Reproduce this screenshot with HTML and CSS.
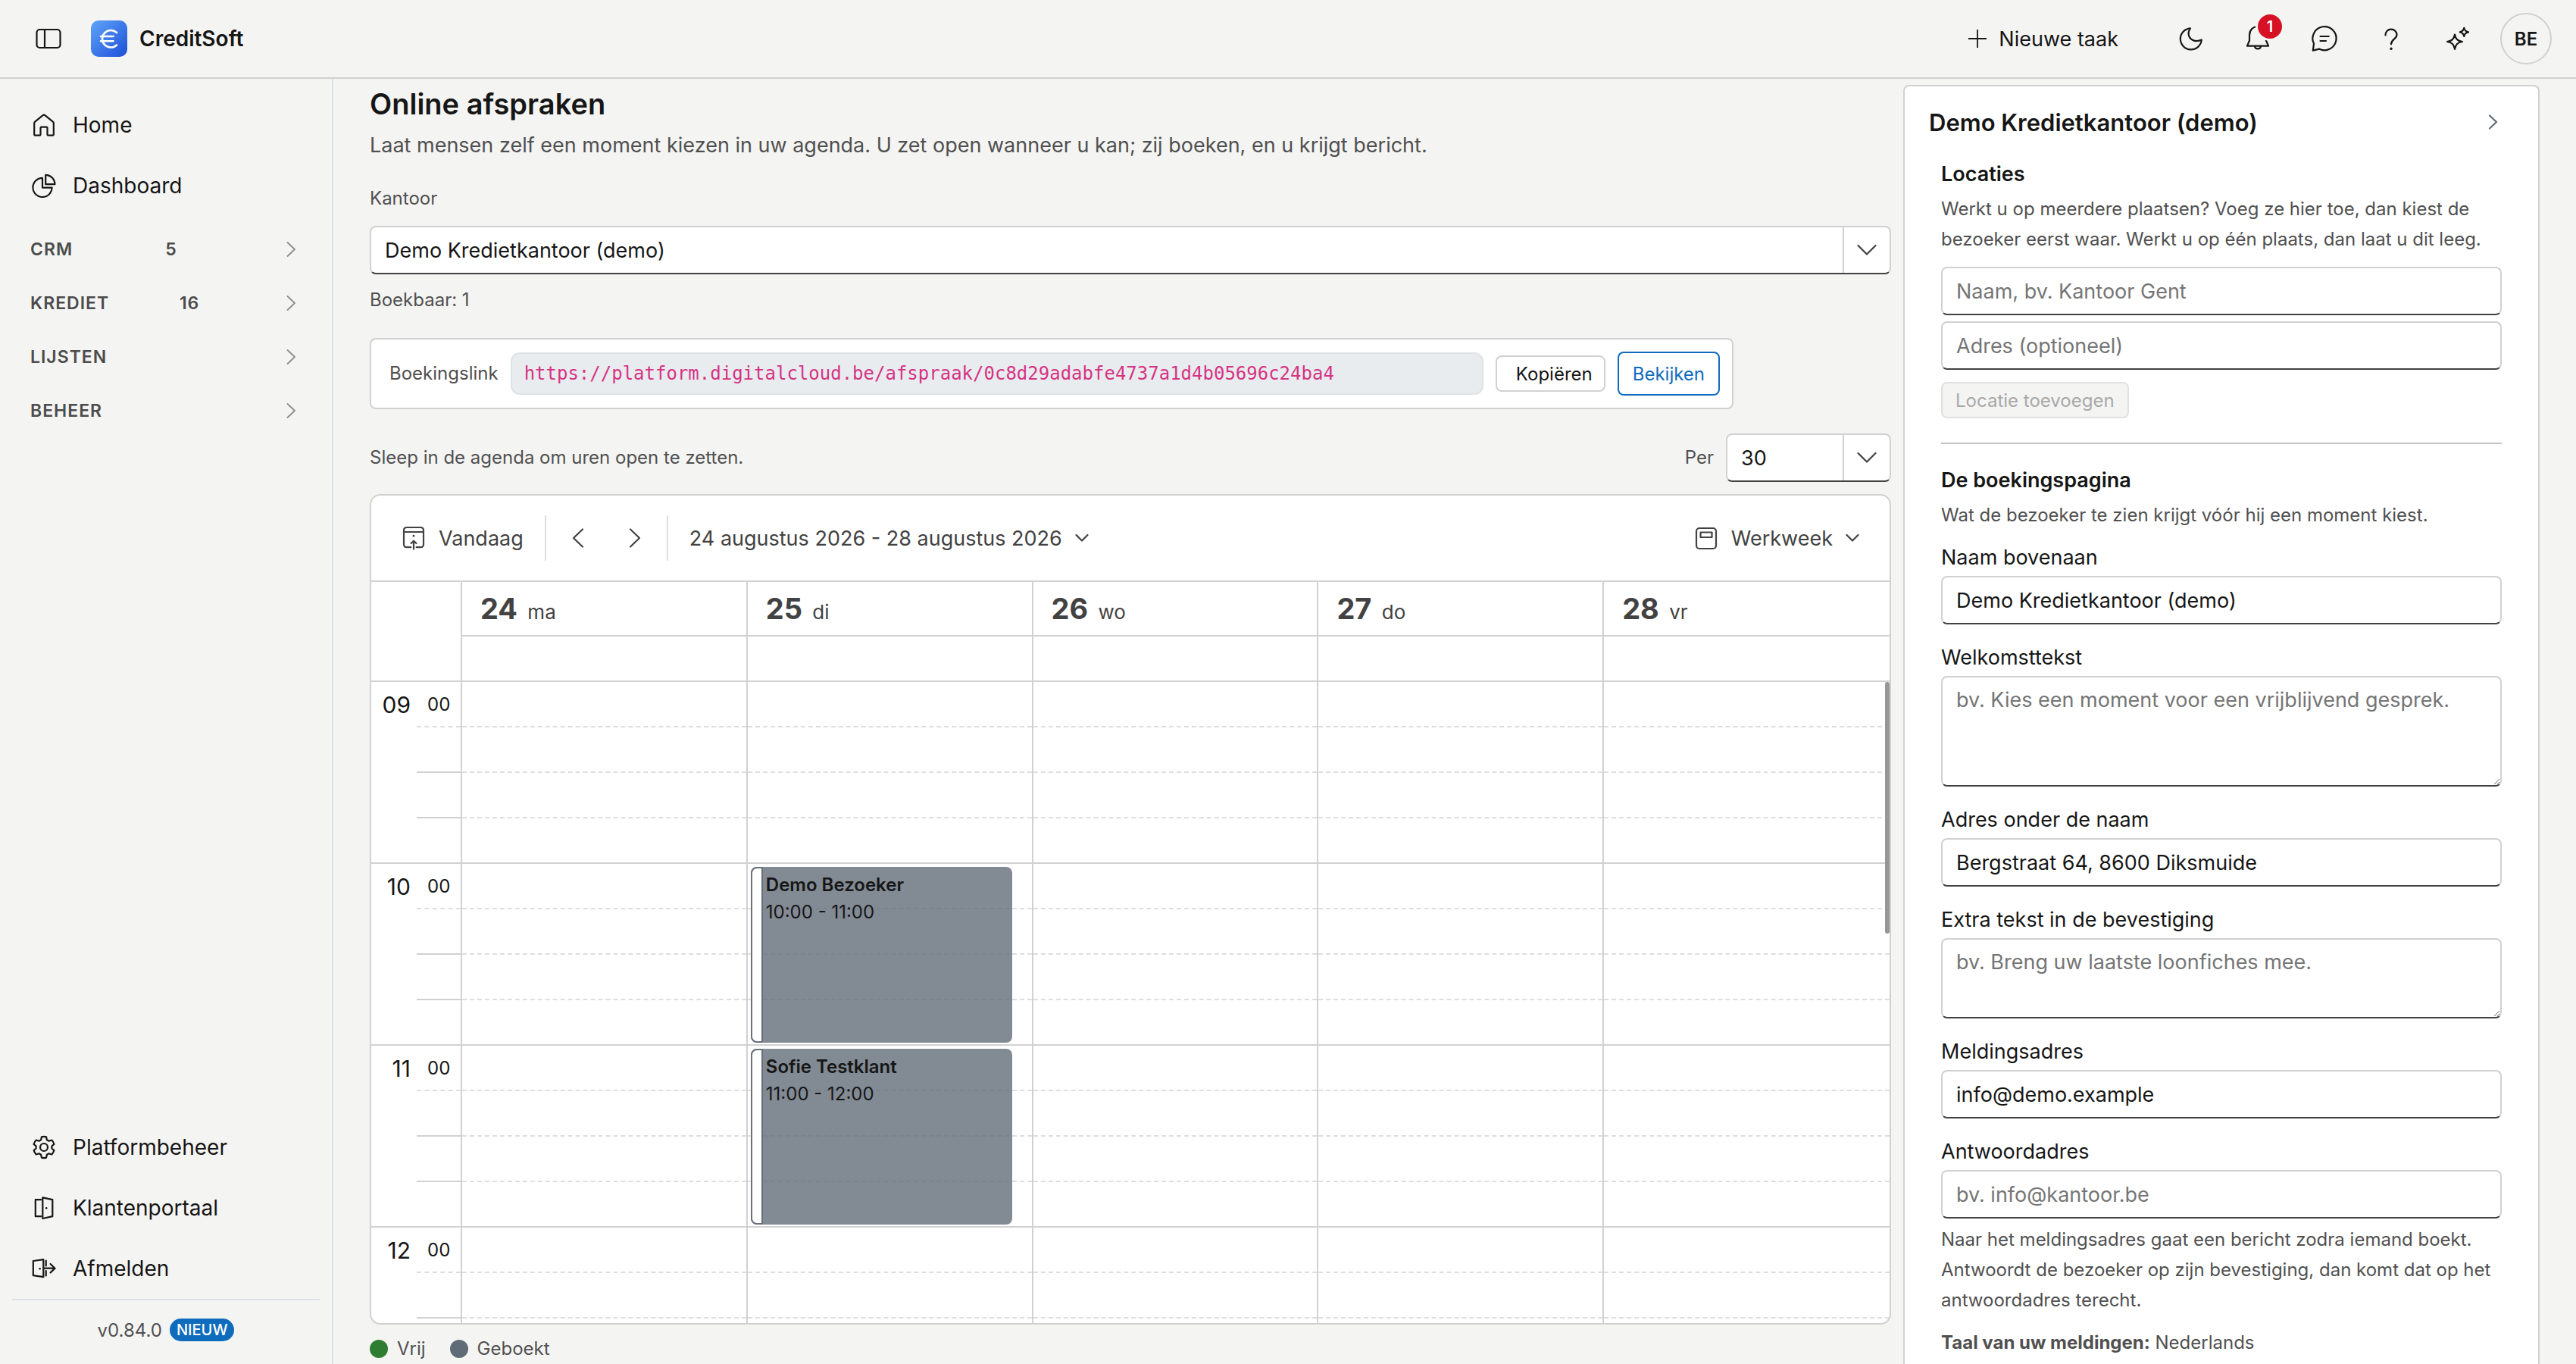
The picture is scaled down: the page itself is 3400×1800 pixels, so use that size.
FILE: index.html
```html
<!DOCTYPE html>
<html lang="nl">
<head>
  <meta charset="UTF-8">
  <meta name="viewport" content="width=device-width, initial-scale=1.0">
  <title>Online afspraken - CreditSoft</title>
  <link rel="stylesheet" href="styles.css">
</head>
<body>

  <header class="topbar">
    <button class="icon-btn" aria-label="Menu">
      <svg class="icon" viewBox="0 0 40 40"><rect x="4.5" y="8" width="31" height="24" rx="4"/><path d="M15 8V32"/></svg>
    </button>
    <a class="brand" href="#">
      <svg class="logo" viewBox="0 0 48 48">
        <defs>
          <linearGradient id="logoFill" x1="0" y1="0" x2="1" y2="1">
            <stop offset="0" stop-color="#60a5fa"/>
            <stop offset="1" stop-color="#1d4ed8"/>
          </linearGradient>
        </defs>
        <rect width="48" height="48" rx="10" fill="url(#logoFill)"/>
        <path d="M34 16A11.3 11.3 0 1 0 34 32.5M13 21H29.5M13 27.2H29.5" fill="none" stroke="#fff" stroke-width="2.6" stroke-linecap="round"/>
      </svg>
      CreditSoft
    </a>
    <div class="actions">
      <button class="new-task">
        <svg class="plus" viewBox="0 0 24 24"><path d="M12 0V24M0 12H24"/></svg>
        Nieuwe taak
      </button>
      <button class="icon-btn" aria-label="Thema">
        <svg class="icon" viewBox="0 0 40 40"><path d="M19 6.4A14 14 0 1 0 33.8 21.5C26.5 25 20 22.3 17.6 17.5C15.9 14 16.8 9.5 19 6.4Z"/></svg>
      </button>
      <button class="icon-btn" aria-label="Meldingen">
        <svg class="icon" viewBox="0 0 40 40"><path d="M20 4C13.5 4 9 9 9 15.5V22.5L6 29.7H34L31 22.5V15.5C31 9 26.5 4 20 4ZM15.8 30A4.3 4.3 0 0 0 24.2 30"/></svg>
        <span class="count">1</span>
      </button>
      <button class="icon-btn" aria-label="Berichten">
        <svg class="icon" viewBox="0 0 40 40"><path d="M6 26.5A15.6 15.6 0 1 1 13 33.6L4.8 35.6ZM14.5 17H25.7M14.5 23H22"/></svg>
      </button>
      <button class="icon-btn" aria-label="Help">
        <svg class="icon" viewBox="0 0 40 40"><path d="M12.5 15.4C12.5 10.7 15.8 7.7 20 7.7S27.5 10.8 27.5 15C27.5 20.5 20 21 20 27.3"/><circle class="dot" cx="20" cy="33.2" r="1.7"/></svg>
      </button>
      <button class="icon-btn" aria-label="Assistent">
        <svg class="icon" viewBox="0 0 40 40"><path d="M16 14.5C17.2 20.7 19.5 22.8 26 24C19.5 25.2 17.2 27.5 16 33.8C14.8 27.5 12.5 25.2 6 24C12.5 22.8 14.8 20.7 16 14.5ZM28.3 5.8C29 9.4 30.2 10.6 34 11.4C30.2 12.2 29 13.4 28.3 17C27.6 13.4 26.4 12.2 22.8 11.4C26.4 10.6 27.6 9.4 28.3 5.8Z"/></svg>
      </button>
      <button class="avatar">BE</button>
    </div>
  </header>

  <div class="layout">

    <nav class="sidebar">
      <a class="nav-item" href="#">
        <svg viewBox="0 0 32 32"><path d="M3.2 13.6C3.2 12.6 3.5 12.2 4.2 11.6L14.6 3.1Q16 2.1 17.4 3.1L27.8 11.6C28.5 12.2 28.8 12.6 28.8 13.6V28.5Q28.8 29.6 27.7 29.6H21.6Q20.5 29.6 20.5 28.5V19.7Q20.5 18.6 19.4 18.6H12.6Q11.5 18.6 11.5 19.7V28.5Q11.5 29.6 10.4 29.6H4.3Q3.2 29.6 3.2 28.5Z"/></svg>
        Home
      </a>
      <a class="nav-item" href="#">
        <svg viewBox="0 0 32 32"><path d="M14 5.8A12.6 12.6 0 1 0 26.6 18.6H14ZM18.2 1.8A12.4 12.4 0 0 1 30.4 14.2H18.2Z"/></svg>
        Dashboard
      </a>
      <div class="groups">
        <button class="group"><span>CRM</span><span>5</span><svg class="group-arrow" viewBox="0 0 36 20"><path d="M23.5 1L33 10L23.5 19"/></svg></button>
        <button class="group"><span>KREDIET</span><span>16</span><svg class="group-arrow" viewBox="0 0 36 20"><path d="M23.5 1L33 10L23.5 19"/></svg></button>
        <button class="group"><span>LIJSTEN</span><svg class="group-arrow" viewBox="0 0 36 20"><path d="M23.5 1L33 10L23.5 19"/></svg></button>
        <button class="group"><span>BEHEER</span><svg class="group-arrow" viewBox="0 0 36 20"><path d="M23.5 1L33 10L23.5 19"/></svg></button>
      </div>

      <div class="sidebar-bottom">
        <a class="nav-item" href="#">
          <svg viewBox="0 0 32 32"><path d="M12.1 6.3L12.9 2.4Q16 1.4 19.1 2.4L19.9 6.3L22.5 7.7L26.3 6.5Q28.6 8.8 29.4 11.9L26.4 14.5V17.5L29.4 20.1Q28.6 23.2 26.3 25.5L22.5 24.3L19.9 25.7L19.1 29.6Q16 30.6 12.9 29.6L12.1 25.7L9.5 24.3L5.7 25.5Q3.4 23.2 2.6 20.1L5.6 17.5V14.5L2.6 11.9Q3.4 8.8 5.7 6.5L9.5 7.7Z"/><circle cx="16" cy="16" r="5"/></svg>
          Platformbeheer
        </a>
        <a class="nav-item" href="#">
          <svg viewBox="0 0 32 32"><path d="M12 5.2H4.8V27.2H12M14.3 2.4L27.3 5.2V27.2L14.3 30Z"/><circle class="dot" cx="19.2" cy="16.2" r="1.3"/></svg>
          Klantenportaal
        </a>
        <a class="nav-item" href="#">
          <svg viewBox="0 0 32 32"><path d="M1.8 6L15.3 4.2V27.2L1.8 25.2ZM18.7 5.5V12.5M18.7 19V25.5M15.3 15.7H30.3M24.6 10L30.5 15.7L24.6 21.4"/><circle class="dot" cx="10.6" cy="16.2" r="1.3"/></svg>
          Afmelden
        </a>
        <div class="version">v0.84.0 <span class="new-badge">NIEUW</span></div>
      </div>
    </nav>

    <main class="content">
      <h1>Online afspraken</h1>
      <p class="subtitle">Laat mensen zelf een moment kiezen in uw agenda. U zet open wanneer u kan; zij boeken, en u krijgt bericht.</p>

      <label class="small" for="kantoor">Kantoor</label>
      <div class="dropdown office">
        <select id="kantoor"><option>Demo Kredietkantoor (demo)</option></select>
        <span class="dropdown-arrow"><svg viewBox="0 0 26 16"><path d="M1.5 2L13 13.5L24.5 2"/></svg></span>
      </div>
      <p class="small bookable">Boekbaar: 1</p>

      <div class="link-card">
        <span class="small">Boekingslink</span>
        <code>https://platform.digitalcloud.be/afspraak/0c8d29adabfe4737a1d4b05696c24ba4</code>
        <button class="btn copy">Kopiëren</button>
        <button class="btn view">Bekijken</button>
      </div>

      <div class="slot-row">
        <p class="small">Sleep in de agenda om uren open te zetten.</p>
        <label class="small" for="per">Per</label>
        <div class="dropdown per">
          <select id="per"><option>30</option></select>
          <span class="dropdown-arrow"><svg viewBox="0 0 26 16"><path d="M1.5 2L13 13.5L24.5 2"/></svg></span>
        </div>
      </div>

      <section class="calendar">
        <div class="cal-toolbar">
          <button class="tool">
            <svg class="tool-icon" viewBox="0 0 32 32"><path d="M12.3 28.2H7Q3 28.2 3 24.2V6Q3 2 7 2H25Q29 2 29 6V24.2Q29 28.2 25 28.2H19.7M3 8H29M16 30.7V20M12.6 23L16 19.7L19.4 23"/><circle class="dot" cx="16" cy="13.2" r="1.4"/></svg>
            Vandaag
          </button>
          <span class="divider"></span>
          <div class="arrows">
            <button class="tool" aria-label="Vorige"><svg class="tool-arrow" viewBox="0 0 40 40"><path d="M26 8.5L14 20L26 31.5"/></svg></button>
            <button class="tool" aria-label="Volgende"><svg class="tool-arrow" viewBox="0 0 40 40"><path d="M14 8.5L26 20L14 31.5"/></svg></button>
          </div>
          <span class="divider"></span>
          <button class="tool">24 augustus 2026 - 28 augustus 2026 <svg class="caret" viewBox="0 0 18 12"><path d="M1.5 2L9 9.5L16.5 2"/></svg></button>
          <button class="tool view-switch">
            <svg class="tool-icon" viewBox="0 0 32 32"><rect x="3" y="3" width="26" height="27" rx="4"/><rect x="8.5" y="8.5" width="15" height="6.5"/></svg>
            Werkweek
            <svg class="caret" viewBox="0 0 18 12"><path d="M1.5 2L9 9.5L16.5 2"/></svg>
          </button>
        </div>

        <div class="cal-head">
          <div class="corner"></div>
          <div class="day-head"><b>24</b> ma</div>
          <div class="day-head"><b>25</b> di</div>
          <div class="day-head"><b>26</b> wo</div>
          <div class="day-head"><b>27</b> do</div>
          <div class="day-head"><b>28</b> vr</div>
          <div class="all-day"></div>
          <div class="all-day"></div>
          <div class="all-day"></div>
          <div class="all-day"></div>
          <div class="all-day"></div>
        </div>

        <div class="cal-body">
          <div class="times" id="times"></div>
          <div class="day"></div>
          <div class="day">
            <div class="appointment" style="top: 244px; height: 232px;">
              <strong>Demo Bezoeker</strong>
              <span>10:00 - 11:00</span>
            </div>
            <div class="appointment" style="top: 484px; height: 232px;">
              <strong>Sofie Testklant</strong>
              <span>11:00 - 12:00</span>
            </div>
          </div>
          <div class="day"></div>
          <div class="day"></div>
          <div class="day"></div>
          <div class="scroll-thumb"></div>
        </div>
      </section>

      <div class="legend small">
        <span><i class="free"></i>Vrij</span>
        <span><i class="booked"></i>Geboekt</span>
      </div>
    </main>

    <aside class="panel">
      <div class="panel-title">
        <h2>Demo Kredietkantoor (demo)</h2>
        <button class="collapse" aria-label="Inklappen"><svg viewBox="0 0 14 20"><path d="M2 1.5L11 10L2 18.5"/></svg></button>
      </div>

      <form class="panel-body">
        <h3>Locaties</h3>
        <p class="hint">Werkt u op meerdere plaatsen? Voeg ze hier toe, dan kiest de bezoeker eerst waar. Werkt u op één plaats, dan laat u dit leeg.</p>
        <input class="field first" type="text" placeholder="Naam, bv. Kantoor Gent" aria-label="Naam">
        <input class="field second" type="text" placeholder="Adres (optioneel)" aria-label="Adres">
        <button class="btn add" type="button" disabled>Locatie toevoegen</button>
        <hr>

        <h3>De boekingspagina</h3>
        <p class="hint last">Wat de bezoeker te zien krijgt vóór hij een moment kiest.</p>

        <div class="form-row">
          <label for="naam">Naam bovenaan</label>
          <input class="field" id="naam" type="text" value="Demo Kredietkantoor (demo)">
        </div>
        <div class="form-row">
          <label for="welkom">Welkomsttekst</label>
          <textarea class="field tall" id="welkom" placeholder="bv. Kies een moment voor een vrijblijvend gesprek."></textarea>
        </div>
        <div class="form-row">
          <label for="adres">Adres onder de naam</label>
          <input class="field" id="adres" type="text" value="Bergstraat 64, 8600 Diksmuide">
        </div>
        <div class="form-row">
          <label for="extra">Extra tekst in de bevestiging</label>
          <textarea class="field" id="extra" placeholder="bv. Breng uw laatste loonfiches mee."></textarea>
        </div>
        <div class="form-row">
          <label for="melding">Meldingsadres</label>
          <input class="field" id="melding" type="text" value="info@demo.example">
        </div>
        <div class="form-row">
          <label for="antwoord">Antwoordadres</label>
          <input class="field" id="antwoord" type="text" placeholder="bv. info@kantoor.be">
        </div>
        <p class="hint">Naar het meldingsadres gaat een bericht zodra iemand boekt. Antwoordt de bezoeker op zijn bevestiging, dan komt dat op het antwoordadres terecht.</p>
        <p class="hint language"><b>Taal van uw meldingen:</b> Nederlands</p>
      </form>
    </aside>

  </div>

  <script>
    const times = document.getElementById("times")
    const days = document.querySelectorAll(".day")

    // four quarters per hour
    for (let hour = 9; hour < 13; hour++) {
      const row = document.createElement("div")
      row.className = "hour"
      row.innerHTML = `<span class="hour-label">${String(hour).padStart(2, "0")}</span>
        <div class="ticks"><div class="tick">00</div><div class="tick"></div><div class="tick"></div><div class="tick"></div></div>`
      times.appendChild(row)

      days.forEach(day => {
        for (let i = 0; i < 4; i++) {
          const slot = document.createElement("div")
          slot.className = i === 3 ? "slot full" : "slot"
          day.appendChild(slot)
        }
      })
    }
  </script>
</body>
</html>
```
FILE: styles.css
```css
* {
  box-sizing: border-box;
}

body {
  margin: 0;
  height: 100vh;
  display: flex;
  flex-direction: column;
  overflow: hidden;
  font-family: Inter, "Liberation Sans", sans-serif;
  font-size: 27px;
  color: #161616;
  background-color: #f4f4f3;
}

h1, h2, h3, p {
  margin: 0;
}

button, input, select, textarea {
  font: inherit;
  color: inherit;
}

button {
  background: none;
  border: none;
  padding: 0;
  cursor: pointer;
}

a {
  color: inherit;
  text-decoration: none;
}

svg {
  display: block;
  flex: none;
  fill: none;
  stroke: currentColor;
  stroke-width: 2.2;
  stroke-linecap: round;
  stroke-linejoin: round;
}

svg .dot {
  fill: currentColor;
  stroke: none;
}

/* top bar */
.topbar {
  display: flex;
  align-items: center;
  height: 104px;
  flex: none;
  padding: 0 32px 0 44px;
  border-bottom: 2px solid #d1d1d1;
}

.icon-btn {
  position: relative;
}

.icon {
  width: 40px;
  height: 40px;
}

.brand {
  display: flex;
  align-items: center;
  gap: 16px;
  margin-left: 36px;
  font-size: 28px;
  font-weight: 600;
}

.logo {
  width: 48px;
  height: 48px;
  stroke: none;
}

.actions {
  display: flex;
  align-items: center;
  gap: 48px;
  margin-left: auto;
}

.new-task {
  display: flex;
  align-items: center;
  gap: 16px;
  margin-right: 28px;
}

.plus {
  width: 24px;
  height: 24px;
  stroke-width: 1.8;
}

.count {
  position: absolute;
  top: -12px;
  left: 20px;
  width: 32px;
  height: 32px;
  border-radius: 50%;
  background-color: #d51123;
  box-shadow: 0 0 0 3px #f4f4f3;
  color: white;
  font-size: 20px;
  font-weight: 600;
  line-height: 32px;
}

.avatar {
  width: 68px;
  height: 68px;
  margin-left: -12px;
  border: 2px solid #d1d1d1;
  border-radius: 50%;
  font-size: 24px;
  font-weight: 600;
}

.layout {
  display: flex;
  flex: 1;
  min-height: 0;
}

/* sidebar */
.sidebar {
  display: flex;
  flex-direction: column;
  width: 440px;
  flex: none;
  padding: 21px 0 6px;
  border-right: 2px solid #dee1e6;
}

.nav-item {
  display: flex;
  align-items: center;
  gap: 22px;
  height: 80px;
  padding-left: 42px;
  font-size: 28px;
}

.nav-item svg {
  width: 32px;
  height: 32px;
}

.groups {
  margin-top: 8px;
}

.group {
  display: flex;
  align-items: center;
  justify-content: space-between;
  width: 100%;
  height: 71px;
  padding: 0 46px 0 40px;
  font-size: 23px;
  font-weight: 600;
  letter-spacing: 1px;
  color: #4c4c4c;
}

.group-arrow {
  width: 36px;
  height: 20px;
  color: #8c8c8c;
  stroke-width: 1.8;
}

.sidebar-bottom {
  margin-top: auto;
}

.version {
  display: flex;
  align-items: center;
  justify-content: center;
  gap: 10px;
  height: 80px;
  margin: 0 16px;
  border-top: 2px solid #dee1e6;
  font-size: 24px;
  color: #505050;
}

.new-badge {
  padding: 0 9px;
  border-radius: 15px;
  background-color: #0f6cbd;
  color: white;
  font-size: 20px;
  font-weight: 500;
  line-height: 30px;
}

/* main column */
.content {
  display: flex;
  flex-direction: column;
  flex: 1;
  min-width: 0;
  padding: 9px 16px 2px 48px;
}

h1 {
  font-size: 38px;
  font-weight: 600;
  line-height: 48px;
}

.subtitle {
  margin: 11px 0 32px;
  line-height: 40px;
  color: #505050;
}

.small {
  font-size: 24px;
  line-height: 36px;
  color: #505050;
}

.dropdown {
  display: flex;
  height: 64px;
  flex: none;
  border: 2px solid #d1d1d1;
  border-bottom-color: #424242;
  border-radius: 8px;
  background-color: white;
}

.dropdown select {
  flex: 1;
  min-width: 0;
  padding: 0 18px;
  border: none;
  background: none;
  appearance: none;
}

.dropdown-arrow {
  display: flex;
  align-items: center;
  justify-content: center;
  width: 62px;
  border-left: 2px solid #d1d1d1;
  color: #424242;
}

.dropdown-arrow svg {
  width: 26px;
  height: 16px;
}

.office {
  margin: 18px 0 16px;
}

.bookable {
  margin-bottom: 32px;
}

.link-card {
  display: flex;
  align-items: center;
  align-self: flex-start;
  gap: 16px;
  width: 1800px;
  max-width: 100%;
  height: 94px;
  padding: 0 16px 0 24px;
  border: 2px solid #d1d1d1;
  border-radius: 8px;
  background-color: white;
}

.link-card code {
  flex: 1;
  min-width: 0;
  height: 56px;
  padding: 0 16px;
  overflow: hidden;
  border: 2px solid #dee2e6;
  border-radius: 12px;
  background-color: #e9ecef;
  color: #d63384;
  font-family: "DejaVu Sans Mono", monospace;
  font-size: 24px;
  line-height: 52px;
}

.btn {
  border: 2px solid #d1d1d1;
  border-radius: 8px;
  font-size: 24px;
}

.copy {
  height: 48px;
  padding: 0 15px 0 25px;
}

.view {
  height: 58px;
  padding: 0 18px;
  border-color: #0f6cbd;
  color: #0f6cbd;
}

.slot-row {
  display: flex;
  align-items: center;
  gap: 16px;
  margin: 32px 0 16px;
}

.slot-row p {
  flex: 1;
}

.per {
  width: 218px;
}

/* calendar */
.calendar {
  display: flex;
  flex-direction: column;
  flex: 1;
  min-height: 0;
  overflow: hidden;
  border: 2px solid #d1d1d1;
  border-radius: 14px;
  background-color: white;
  color: #424242;
}

.cal-toolbar {
  display: flex;
  align-items: center;
  height: 114px;
  flex: none;
  padding: 0 40px;
  border-bottom: 2px solid #d1d1d1;
}

.tool {
  display: flex;
  align-items: center;
  gap: 17px;
}

.tool-icon {
  width: 32px;
  height: 32px;
}

.tool-arrow {
  width: 40px;
  height: 40px;
}

.caret {
  width: 18px;
  height: 12px;
}

.divider {
  width: 2px;
  height: 60px;
  margin: 0 28px;
  background-color: #dedede;
}

.arrows {
  display: flex;
  gap: 35px;
  margin: 0 -6px;
}

.view-switch {
  margin-left: auto;
}

.cal-head, .cal-body {
  display: grid;
  grid-template-columns: 120px repeat(5, 1fr);
}

.cal-head {
  flex: none;
  grid-template-rows: 72px 60px;
}

.corner {
  grid-row: span 2;
}

.corner, .day-head, .all-day {
  border-right: 2px solid #d1d1d1;
  border-bottom: 2px solid #d1d1d1;
}

.day-head {
  padding-left: 24px;
  font-size: 26px;
  line-height: 70px;
}

.day-head b {
  margin-right: 6px;
  font-size: 38px;
}

.day-head:nth-child(6), .all-day:last-child, .day:nth-child(6) {
  border-right: none;
}

.cal-body {
  position: relative;
  flex: 1;
  min-height: 0;
  overflow: hidden;
}

.times, .day {
  border-right: 2px solid #d1d1d1;
}

.day {
  position: relative;
}

.hour {
  display: grid;
  grid-template-columns: 60px 1fr;
  height: 240px;
  color: #161616;
}

.hour-label {
  padding: 12px 8px 0 0;
  border-bottom: 2px solid #d1d1d1;
  font-size: 30px;
  line-height: 36px;
  text-align: right;
}

.tick {
  height: 60px;
  padding: 12px 0 0 14px;
  border-bottom: 2px solid #d1d1d1;
  font-size: 24px;
  line-height: 36px;
}

.tick:first-child {
  border-bottom: 2px dashed #dedede;
}

.slot {
  height: 60px;
  border-bottom: 2px dashed #dedede;
}

.slot.full {
  border-bottom: 2px solid #d1d1d1;
}

.appointment {
  position: absolute;
  left: 4px;
  width: 92%;
  display: flex;
  flex-direction: column;
  padding: 6px 8px 6px 20px;
  border-radius: 8px;
  background-color: rgba(97, 106, 119, 0.79);
  color: #161616;
  font-size: 24px;
  line-height: 36px;
}

/* white status strip on the left edge */
.appointment::before {
  content: "";
  position: absolute;
  top: 0;
  bottom: 0;
  left: 0;
  width: 12px;
  border: 2px solid #68707a;
  border-radius: 8px 0 0 8px;
  background-color: white;
}

.appointment strong {
  font-weight: 600;
}

.scroll-thumb {
  position: absolute;
  top: 0;
  right: 0;
  width: 6px;
  height: 332px;
  border-radius: 3px;
  background-color: #979797;
}

.legend {
  display: flex;
  gap: 32px;
  margin-top: 14px;
}

.legend span {
  display: flex;
  align-items: center;
  gap: 12px;
}

.legend i {
  width: 24px;
  height: 24px;
  border-radius: 50%;
}

.free {
  background-color: #2e7d32;
}

.booked {
  background-color: #5f6b76;
}

/* right panel */
.panel {
  width: 840px;
  flex: none;
  margin: 8px 48px 0 0;
  padding: 27px 48px 0 32px;
  border: 2px solid #d1d1d1;
  border-bottom: none;
  border-radius: 8px 8px 0 0;
  background-color: white;
  overflow: hidden;
}

.panel-title {
  display: flex;
  align-items: center;
  justify-content: space-between;
  height: 40px;
}

h2 {
  font-size: 31px;
  font-weight: 600;
}

.collapse {
  margin-right: 4px;
  color: #5f6b76;
}

.collapse svg {
  width: 14px;
  height: 20px;
}

.panel-body {
  margin-top: 29px;
  padding-left: 16px;
}

h3 {
  font-size: 27px;
  font-weight: 600;
  line-height: 40px;
}

.hint {
  margin-top: 6px;
  font-size: 24px;
  line-height: 40px;
  color: #505050;
}

.hint.last {
  margin-bottom: 18px;
}

.language {
  margin-top: 16px;
}

.language b {
  font-weight: 700;
}

.field {
  display: block;
  width: 100%;
  height: 64px;
  padding: 0 18px;
  border: 2px solid #d1d1d1;
  border-bottom-color: #424242;
  border-radius: 8px;
  background-color: white;
}

.field::placeholder {
  color: #757575;
}

textarea.field {
  height: 106px;
  padding: 12px 18px;
  line-height: 36px;
  resize: vertical;
}

textarea.tall {
  height: 146px;
}

.first {
  margin-top: 16px;
}

.second {
  margin-top: 8px;
}

.add {
  height: 48px;
  margin-top: 16px;
  padding: 0 17px;
  border-color: #e0e0e0;
  background-color: #f4f4f3;
  color: #a8a8a8;
}

hr {
  height: 2px;
  margin: 32px 0 28px;
  border: none;
  background-color: #c4c4c4;
}

.form-row {
  margin-bottom: 26px;
}

.form-row:last-of-type {
  margin-bottom: 8px;
}

.form-row label {
  display: block;
  margin-bottom: 6px;
  line-height: 36px;
}
```
